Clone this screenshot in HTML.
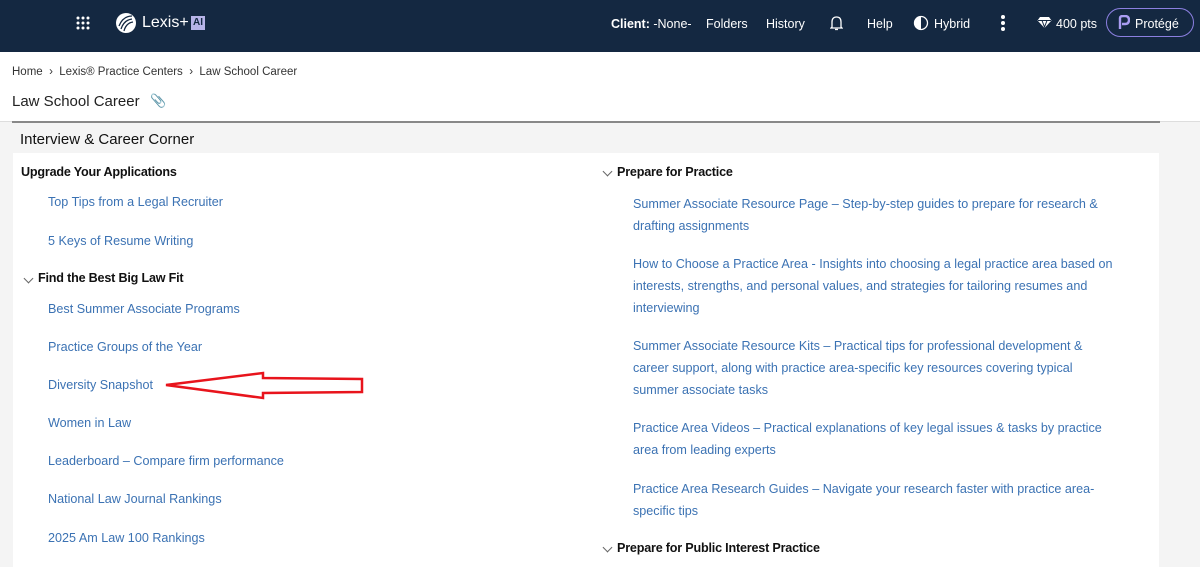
<!DOCTYPE html>
<html><head><meta charset="utf-8"><style>
*{margin:0;padding:0;box-sizing:border-box}
body{width:1200px;height:567px;overflow:hidden;background:#fff;font-family:"Liberation Sans",sans-serif;position:relative}
.top{position:absolute;left:0;top:0;width:1200px;height:52px;background:#142841;color:#fff;font-size:12.5px}
.top span{position:absolute;top:16px}
.a{position:absolute;color:#3b72b3;font-size:12.6px;white-space:nowrap}
.h{position:absolute;color:#111;font-size:12.6px;font-weight:bold;white-space:nowrap;letter-spacing:-0.2px}
.chev{position:absolute;width:7px;height:7px;border-right:1px solid #666;border-bottom:1px solid #666;transform:rotate(45deg)}
</style></head><body>
<div class="top">
<svg style="position:absolute;left:76px;top:16px" width="14" height="14"><g fill="#fff"><circle cx="2" cy="2" r="1.5"/><circle cx="7" cy="2" r="1.5"/><circle cx="12" cy="2" r="1.5"/><circle cx="2" cy="7" r="1.5"/><circle cx="7" cy="7" r="1.5"/><circle cx="12" cy="7" r="1.5"/><circle cx="2" cy="12" r="1.5"/><circle cx="7" cy="12" r="1.5"/><circle cx="12" cy="12" r="1.5"/></g></svg>
<svg style="position:absolute;left:115px;top:12px" width="22" height="22"><circle cx="11" cy="11" r="10" fill="#fff"/><path d="M4 14 Q8 4 17 4 M6 17 Q9 8 17 7 M9 19 Q11 11 18 10" stroke="#142841" stroke-width="1.3" fill="none"/></svg>
<span style="left:142px;top:14px;font-size:16px">Lexis+</span>
<span style="left:191px;top:16px;background:#b7b4e8;color:#142841;font-size:10px;font-weight:bold;padding:1px 2px;line-height:12px">AI</span>
<span style="left:611px;top:17px"><b>Client:</b> -None-</span>
<span style="left:706px;top:17px">Folders</span>
<span style="left:766px;top:17px">History</span>
<svg style="position:absolute;left:830px;top:15px" width="13" height="16"><path d="M2 12 L2 7 Q2 2 6.5 2 Q11 2 11 7 L11 12 L12 13 L1 13 Z M5 14.5 L8 14.5" stroke="#fff" stroke-width="1.3" fill="none"/></svg>
<span style="left:867px;top:17px">Help</span>
<svg style="position:absolute;left:913px;top:15px" width="16" height="16"><circle cx="8" cy="8" r="6.5" stroke="#fff" stroke-width="1.3" fill="none"/><path d="M8 1.5 A6.5 6.5 0 0 0 8 14.5 Z" fill="#fff"/></svg>
<span style="left:934px;top:17px">Hybrid</span>
<svg style="position:absolute;left:1000px;top:14px" width="6" height="18"><g fill="#fff"><circle cx="3" cy="3" r="2"/><circle cx="3" cy="9" r="2"/><circle cx="3" cy="15" r="2"/></g></svg>
<svg style="position:absolute;left:1037px;top:16px" width="15" height="13"><path d="M3 1 L12 1 L14.5 4.5 L7.5 12 L0.5 4.5 Z" fill="#fff"/><path d="M1 4.5 L14 4.5 M5 4.5 L7.5 11 L10 4.5" stroke="#142841" stroke-width="1" fill="none"/></svg>
<span style="left:1056px;top:17px">400 pts</span>
<div style="position:absolute;left:1106px;top:8px;width:88px;height:29px;border:1.5px solid #8b7fe0;border-radius:15px"></div>
<svg style="position:absolute;left:1118px;top:15px" width="12" height="15"><path d="M2 14 L2 3 Q2 1 5 1 L7 1 Q11 1 11 5 Q11 9 7 9 L4 9" stroke="#a99cf2" stroke-width="2.4" fill="none"/></svg>
<span style="left:1135px;top:17px">Protégé</span>
</div>
<div style="position:absolute;left:12px;top:66px;font-size:11.5px;color:#333">Home &nbsp;&#8250;&nbsp; Lexis® Practice Centers &nbsp;&#8250;&nbsp; Law School Career</div>
<div style="position:absolute;left:12px;top:93px;font-size:15px;color:#222">Law School Career</div>
<div style="position:absolute;left:150px;top:93px;font-size:13px;color:#555">&#128206;</div>
<div style="position:absolute;left:0;top:121px;width:1200px;height:446px;background:#f4f4f4;border-top:1px solid #ddd"></div>
<div style="position:absolute;left:12px;top:121px;width:1148px;height:2px;background:#888"></div>
<div style="position:absolute;left:20px;top:131px;font-size:15px;color:#111">Interview &amp; Career Corner</div>
<div style="position:absolute;left:13px;top:153px;width:1146px;height:414px;background:#fff"></div>
<div class="h" style="left:21px;top:165px">Upgrade Your Applications</div>
<div class="a" style="left:48px;top:195px">Top Tips from a Legal Recruiter</div>
<div class="a" style="left:48px;top:234px">5 Keys of Resume Writing</div>
<div class="chev" style="left:25px;top:275px"></div>
<div class="h" style="left:38px;top:271px">Find the Best Big Law Fit</div>
<div class="a" style="left:48px;top:302px">Best Summer Associate Programs</div>
<div class="a" style="left:48px;top:340px">Practice Groups of the Year</div>
<div class="a" style="left:48px;top:378px">Diversity Snapshot</div>
<div class="a" style="left:48px;top:416px">Women in Law</div>
<div class="a" style="left:48px;top:454px">Leaderboard – Compare firm performance</div>
<div class="a" style="left:48px;top:492px">National Law Journal Rankings</div>
<div class="a" style="left:48px;top:531px">2025 Am Law 100 Rankings</div>
<svg style="position:absolute;left:160px;top:368px" width="210" height="36"><path d="M6 17 L103 5 L103 10 L202 11 L202 24 L103 25 L103 30 Z" fill="none" stroke="#e8141c" stroke-width="2.5" stroke-linejoin="miter"/></svg>
<div class="chev" style="left:604px;top:168px"></div>
<div class="h" style="left:617px;top:165px">Prepare for Practice</div>
<div class="a" style="left:633px;top:197px">Summer Associate Resource Page – Step-by-step guides to prepare for research &amp;</div>
<div class="a" style="left:633px;top:219px">drafting assignments</div>
<div class="a" style="left:633px;top:257px">How to Choose a Practice Area - Insights into choosing a legal practice area based on</div>
<div class="a" style="left:633px;top:279px">interests, strengths, and personal values, and strategies for tailoring resumes and</div>
<div class="a" style="left:633px;top:301px">interviewing</div>
<div class="a" style="left:633px;top:339px">Summer Associate Resource Kits – Practical tips for professional development &amp;</div>
<div class="a" style="left:633px;top:361px">career support, along with practice area-specific key resources covering typical</div>
<div class="a" style="left:633px;top:383px">summer associate tasks</div>
<div class="a" style="left:633px;top:421px">Practice Area Videos – Practical explanations of key legal issues &amp; tasks by practice</div>
<div class="a" style="left:633px;top:443px">area from leading experts</div>
<div class="a" style="left:633px;top:482px">Practice Area Research Guides – Navigate your research faster with practice area-</div>
<div class="a" style="left:633px;top:504px">specific tips</div>
<div class="chev" style="left:604px;top:544px"></div>
<div class="h" style="left:617px;top:541px">Prepare for Public Interest Practice</div>
</body></html>
